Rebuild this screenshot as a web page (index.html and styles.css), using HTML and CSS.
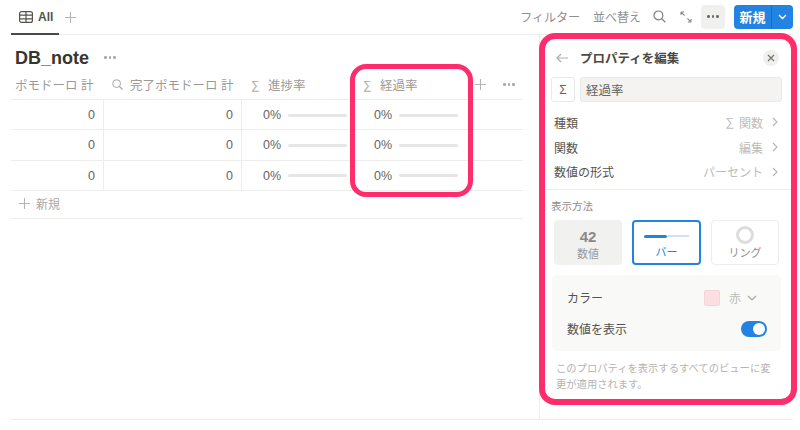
FILE: index.html
```html
<!DOCTYPE html>
<html lang="ja">
<head>
<meta charset="utf-8">
<title>DB_note</title>
<link rel="stylesheet" href="styles.css">
</head>
<body>
<div class="app">
  <header class="topbar">
    <div class="tabs">
      <div class="tab">
        <svg class="ico-table" viewBox="0 0 14 12" width="14" height="12"><rect x="0.6" y="0.6" width="12.8" height="10.8" rx="2" fill="none" stroke="#55534e" stroke-width="1.2"/><path d="M0.6 4.2H13.4M0.6 7.8H13.4M7 0.6V11.4" fill="none" stroke="#55534e" stroke-width="1.2"/></svg>
        <span>All</span>
      </div>
      <svg class="tab-plus" viewBox="0 0 11 11" width="11" height="11"><path d="M5.5 0V11M0 5.5H11" stroke="#b5b4b1" stroke-width="1.1"/></svg>
    </div>
    <div class="tools">
      <span class="tool-text filter">フィルター</span>
      <span class="tool-text sort">並べ替え</span>
      <svg class="tool-search" viewBox="0 0 13 13" width="13" height="13"><circle cx="5.4" cy="5.4" r="4.4" fill="none" stroke="#7d7c78" stroke-width="1.2"/><path d="M8.6 8.6L12.3 12.3" stroke="#7d7c78" stroke-width="1.3"/></svg>
      <svg class="tool-expand" viewBox="0 0 12 12" width="12" height="12"><path d="M1 1L4.6 4.6M1 1V4M1 1H4M11 11L7.4 7.4M11 11V8M11 11H8" fill="none" stroke="#8b8a86" stroke-width="1.1"/></svg>
      <div class="more-btn"><i></i><i></i><i></i></div>
      <div class="new-btn"><span class="new-label">新規</span><span class="new-arrow"><svg viewBox="0 0 9 6" width="9" height="6"><path d="M1 1L4.5 4.5L8 1" fill="none" stroke="#fff" stroke-width="1.4"/></svg></span></div>
    </div>
  </header>
  <main class="main">
    <section class="db">
      <div class="title-row"><h1>DB_note</h1><div class="dots title-dots"><i></i><i></i><i></i></div></div>
      <div class="table">
        <div class="row head">
          <div class="hcell c1"><span>ポモドーロ 計</span></div>
          <div class="hcell c2"><svg viewBox="0 0 11 11" width="11" height="11"><circle cx="4.6" cy="4.6" r="3.9" fill="none" stroke="#a5a4a1" stroke-width="1"/><path d="M7.4 7.4L10.5 10.5" stroke="#a5a4a1" stroke-width="1.1"/></svg><span>完了ポモドーロ 計</span></div>
          <div class="hcell c3"><span class="sigma">∑</span><span>進捗率</span></div>
          <div class="hcell c4"><span class="sigma">∑</span><span>経過率</span></div>
          <div class="hextra">
            <svg viewBox="0 0 11 11" width="11" height="11"><path d="M5.5 0V11M0 5.5H11" stroke="#b5b4b1" stroke-width="1.1"/></svg>
            <div class="dots"><i></i><i></i><i></i></div>
          </div>
        </div>
        <div class="row"><div class="cell c1 num">0</div><div class="cell c2 num">0</div><div class="cell c3 pct"><span>0%</span><b></b></div><div class="cell c4 pct"><span>0%</span><b></b></div></div>
        <div class="row"><div class="cell c1 num">0</div><div class="cell c2 num">0</div><div class="cell c3 pct"><span>0%</span><b></b></div><div class="cell c4 pct"><span>0%</span><b></b></div></div>
        <div class="row"><div class="cell c1 num">0</div><div class="cell c2 num">0</div><div class="cell c3 pct"><span>0%</span><b></b></div><div class="cell c4 pct"><span>0%</span><b></b></div></div>
        <div class="row add"><svg viewBox="0 0 11 11" width="11" height="11"><path d="M5.5 0V11M0 5.5H11" stroke="#b5b4b1" stroke-width="1.1"/></svg><span>新規</span></div>
      </div>
    </section>
    <aside class="panel">
      <div class="panel-head">
        <svg class="back" viewBox="0 0 12 10" width="12" height="10"><path d="M12 5H1M5 1L1 5L5 9" fill="none" stroke="#aeadaa" stroke-width="1.2"/></svg>
        <strong>プロパティを編集</strong>
        <span class="close"><svg viewBox="0 0 8 8" width="8" height="8"><path d="M1 1L7 7M7 1L1 7" stroke="#77766f" stroke-width="1.3"/></svg></span>
      </div>
      <div class="name-row">
        <span class="sig-box">Σ</span>
        <span class="name-input">経過率</span>
      </div>
      <div class="props">
        <div class="prop"><span>種類</span><span class="val"><span class="val-sig">∑</span>関数<svg viewBox="0 0 6 10" width="6" height="10"><path d="M1 1L5 5L1 9" fill="none" stroke="#b5b4b1" stroke-width="1.1"/></svg></span></div>
        <div class="prop"><span>関数</span><span class="val">編集<svg viewBox="0 0 6 10" width="6" height="10"><path d="M1 1L5 5L1 9" fill="none" stroke="#b5b4b1" stroke-width="1.1"/></svg></span></div>
        <div class="prop"><span>数値の形式</span><span class="val">パーセント<svg viewBox="0 0 6 10" width="6" height="10"><path d="M1 1L5 5L1 9" fill="none" stroke="#b5b4b1" stroke-width="1.1"/></svg></span></div>
      </div>
      <div class="divider"></div>
      <div class="section-label">表示方法</div>
      <div class="cards">
        <div class="card card-num"><span class="big">42</span><span>数値</span></div>
        <div class="card card-bar"><span class="mini-bar"><b></b><i></i></span><span>バー</span></div>
        <div class="card card-ring"><span class="ring"></span><span>リング</span></div>
      </div>
      <div class="group">
        <div class="group-row"><span>カラー</span><span class="color-val"><i class="swatch"></i><span>赤</span><svg viewBox="0 0 10 6" width="10" height="6"><path d="M1 1L5 5L9 1" fill="none" stroke="#aaa9a6" stroke-width="1.2"/></svg></span></div>
        <div class="group-row"><span>数値を表示</span><span class="toggle"><i></i></span></div>
      </div>
      <p class="note">このプロパティを表示するすべてのビューに変更が適用されます。</p>
    </aside>
  </main>
</div>
<div class="mark mark-col"></div>
<div class="mark mark-panel"></div>
</body>
</html>
```
FILE: styles.css
```css
* { box-sizing: border-box; }
html, body { margin: 0; padding: 0; }
body {
  width: 800px;
  height: 430px;
  overflow: hidden;
  position: relative;
  background: #fff;
  color: #55534e;
  font-family: "Liberation Sans", "Noto Sans CJK JP", sans-serif;
}
.app { margin-left: 11px; width: 782px; height: 420px; display: flex; flex-direction: column; }
.topbar {
  height: 35px;
  flex: none;
  display: flex;
  justify-content: space-between;
  border-bottom: 1px solid #ededec;
}
.tabs { display: flex; align-items: flex-start; }
.tab {
  width: 48px;
  height: 35px;
  padding: 0 0 0 8px;
  display: flex;
  align-items: center;
  gap: 5px;
  font-size: 12px;
  font-weight: 700;
  color: #55534e;
  border-bottom: 2px solid #4a4945;
}
.tab-plus { margin: 12px 0 0 6px; }
.tools { display: flex; align-items: center; padding-bottom: 1px; color: #8f8e8a; font-size: 12px; }
.tool-text { white-space: nowrap; }
.filter { margin-right: 13px; }
.sort { margin-right: 12px; }
.tool-search { margin-right: 14px; }
.tool-expand { margin-right: 9px; }
.more-btn {
  width: 24px;
  height: 24px;
  margin-right: 9px;
  border-radius: 4px;
  background: #f0f0ef;
  display: flex;
  align-items: center;
  justify-content: center;
  gap: 2px;
}
.more-btn i, .dots i { width: 2.5px; height: 2.5px; border-radius: 50%; background: #6f6e69; display: block; }
.new-btn {
  width: 59px;
  height: 24px;
  border-radius: 4px;
  background: #2383e2;
  color: #fff;
  display: flex;
  font-size: 13px;
  font-weight: 700;
}
.new-label { width: 38px; display: flex; align-items: center; justify-content: center; border-right: 1px solid #1a6fc4; }
.new-arrow { flex: 1; display: flex; align-items: center; justify-content: center; }
.main { flex: 1; display: flex; border-bottom: 1px solid #ededec; min-height: 0; }
.db { width: 528px; flex: none; }
.title-row { display: flex; align-items: center; height: 40px; padding: 5px 0 0 4px; }
h1 { margin: 0; font-size: 18px; line-height: 24px; font-weight: 700; color: #37352f; }
.dots { display: flex; gap: 2px; }
.dots i { background: #a9a8a5; }
.title-dots { margin-left: 15px; }
.table { width: 512px; }
.row { display: flex; height: 30.3px; border-bottom: 1px solid #ededec; font-size: 13px; }
.row.head { height: 25px; padding-bottom: 5px; }
.cell, .hcell { height: 100%; display: flex; align-items: center; }
.c1 { width: 92px; }
.c2 { width: 138px; border-left: 1px solid #ededec; }
.c3 { width: 112px; border-left: 1px solid #ededec; }
.c4 { width: 112px; }
.num { justify-content: flex-end; padding-right: 8px; color: #66645f; font-size: 12.5px; padding-top: 1px; }
.hcell { color: #9b9a97; font-size: 12.5px; white-space: nowrap; border-left: 0; }
.hcell.c1 { padding-left: 4px; }
.hcell.c2 { padding-left: 9px; gap: 7px; }
.hcell.c3, .hcell.c4 { padding-left: 10px; gap: 7px; }
.sigma { font-size: 12px; color: #aaa9a6; width: 10px; }
.pct { padding-left: 21px; color: #66645f; font-size: 12.5px; padding-top: 1px; }
.pct b { display: block; width: 59px; height: 3px; margin-left: 7px; border-radius: 2px; background: #e6e6e5; }
.hextra { display: flex; align-items: center; margin-left: 10px; gap: 17px; }
.add { height: 28px; align-items: center; padding-left: 8px; gap: 6px; color: #a9a8a5; font-size: 12px; padding-bottom: 2px; }
.panel {
  flex: 1;
  border-left: 1px solid #ededec;
  padding: 0 0 0 11px;
  font-size: 12px;
  position: relative;
}
.panel-head { height: 42px; display: flex; align-items: center; padding: 3px 0 0 5px; }
.panel-head strong { margin-left: 12px; font-size: 12.5px; color: #4a4945; }
.close {
  width: 16px;
  height: 16px;
  margin-left: auto;
  margin-right: 14px;
  border-radius: 50%;
  background: #efefee;
  display: flex;
  align-items: center;
  justify-content: center;
}
.name-row { display: flex; gap: 5px; height: 25px; }
.sig-box {
  width: 24px;
  border: 1px solid #e9e9e8;
  border-radius: 3px;
  display: flex;
  align-items: center;
  justify-content: center;
  font-size: 12px;
  color: #66645f;
}
.name-input {
  width: 202px;
  padding-left: 5px;
  background: #f4f3f1;
  border: 1px solid #e9e9e7;
  border-radius: 3px;
  display: flex;
  align-items: center;
  font-size: 12.5px;
  color: #66645f;
}
.props { margin-top: 8px; }
.prop {
  height: 24.7px;
  padding: 0 15px 0 3px;
  display: flex;
  align-items: center;
  justify-content: space-between;
  color: #55534e;
}
.val { display: flex; align-items: center; color: #bdbcb9; }
.val svg { margin-left: 9px; }
.val-sig { margin-right: 5px; }
.divider { height: 1px; background: #ededec; margin: 5px 0 0 -5px; }
.section-label { margin-top: 9px; font-size: 10.5px; line-height: 14px; color: #8f8e8a; }
.cards { display: flex; gap: 10px; margin: 7px 0 0 3px; }
.card {
  width: 68px;
  height: 45px;
  border-radius: 4px;
  display: flex;
  flex-direction: column;
  align-items: center;
  justify-content: flex-end;
  font-size: 11px;
  line-height: 14px;
  padding-bottom: 4px;
  color: #9b9a97;
}
.card-num { background: #f1f1f0; }
.big { font-size: 15px; line-height: 16px; margin-bottom: 2px; font-weight: 700; color: #8a8985; }
.card-bar { width: 69px; border: 2px solid #2383e2; color: #2383e2; }
.card-ring { border: 1px solid #ededec; color: #8f8e8a; }
.mini-bar { display: flex; align-items: center; width: 45px; height: 14px; margin-bottom: 2px; }
.mini-bar b { width: 23px; height: 3px; background: #2383e2; border-radius: 2px; }
.mini-bar i { flex: 1; height: 2px; background: #cfe3f8; }
.ring { width: 18px; height: 18px; margin-bottom: 2px; border-radius: 50%; border: 3px solid #dcdcdb; }
.group {
  width: 229px;
  height: 76px;
  margin: 10px 0 0 1px;
  padding: 7px 14px 7px 15px;
  background: #f9f9f8;
  border-radius: 5px;
}
.group-row { height: 31px; display: flex; align-items: center; justify-content: space-between; color: #55534e; }
.color-val { display: flex; align-items: center; gap: 6px; color: #bdbcb9; margin-right: 10px; }
.swatch { display: block; width: 16px; height: 16px; margin-right: 3px; border-radius: 2px; background: #fcdfe3; border: 1px solid #f8d2d8; }
.toggle { width: 26px; height: 16px; padding: 2px; border-radius: 8px; background: #2383e2; display: flex; justify-content: flex-end; }
.toggle i { width: 12px; height: 12px; border-radius: 50%; background: #fff; display: block; }
.note { width: 220px; margin: 10px 0 0 5px; font-size: 10.3px; line-height: 16px; color: #b5b4b1; }
.mark { position: absolute; border: 5px solid #ff2d6b; pointer-events: none; }
.mark-col { left: 350px; top: 64px; width: 123px; height: 133px; border-radius: 16px; }
.mark-panel { left: 539px; top: 33px; width: 258px; height: 372px; border-radius: 16px; border-width: 6px; }
```
